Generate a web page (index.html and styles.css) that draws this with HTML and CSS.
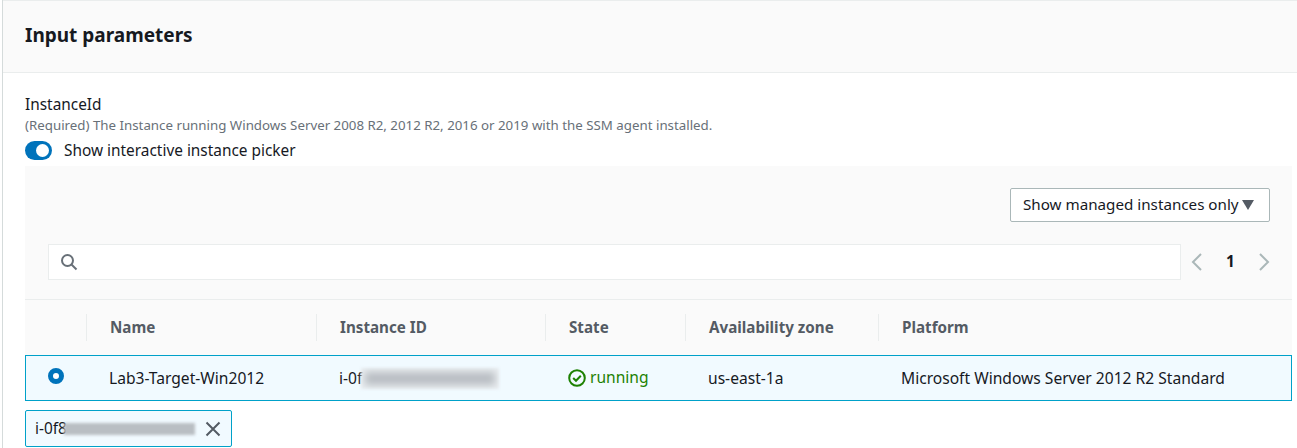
FILE: index.html
```html
<!DOCTYPE html>
<html lang="en">
<head>
    <meta charset="UTF-8">
    <title>Input parameters</title>
    <link rel="stylesheet" href="styles.css">
</head>
<body>
    <div class="card">
        <div class="card-head">
            <h2>Input parameters</h2>
        </div>
        <div class="card-body">
            <div class="label">InstanceId</div>
            <div class="hint">(Required) The Instance running Windows Server 2008 R2, 2012 R2, 2016 or 2019 with the SSM agent installed.</div>
            <div class="toggle-row">
                <span class="toggle"><span class="knob"></span></span>
                <span>Show interactive instance picker</span>
            </div>
            <div class="picker">
                <div class="filter-row">
                    <div class="select">
                        <span class="select-text">Show managed instances only</span>
                        <svg width="14" height="10" viewBox="0 0 14 10"><path d="M1 0h12L7 10z" fill="#545b64"/></svg>
                    </div>
                </div>
                <div class="search-row">
                    <div class="search">
                        <svg width="18" height="18" viewBox="0 0 18 18" fill="none" stroke="#687078" stroke-width="2"><circle cx="7.5" cy="7.5" r="5.5"/><path d="M11.5 11.5l5 5"/></svg>
                    </div>
                    <div class="pager">
                        <svg width="12" height="18" viewBox="0 0 12 18" fill="none" stroke="#aab7b8" stroke-width="2"><path d="M10 1L2 9l8 8"/></svg>
                        <b>1</b>
                        <svg width="12" height="18" viewBox="0 0 12 18" fill="none" stroke="#aab7b8" stroke-width="2"><path d="M2 1l8 8-8 8"/></svg>
                    </div>
                </div>
                <div class="table-head">
                    <div class="th"></div>
                    <div class="th">Name</div>
                    <div class="th">Instance ID</div>
                    <div class="th">State</div>
                    <div class="th">Availability zone</div>
                    <div class="th">Platform</div>
                </div>
            </div>
            <div class="table-row">
                <div class="td"><span class="radio"></span></div>
                <div class="td">Lab3-Target-Win2012</div>
                <div class="td">i-0f<span class="blur blur-id"></span></div>
                <div class="td running">
                    <svg width="18" height="18" viewBox="0 0 18 18" fill="none" stroke="#1d8102" stroke-width="2"><circle cx="9" cy="9" r="7.8"/><path d="M5.2 9l2.8 2.8 4.8-5"/></svg>
                    <span>running</span>
                </div>
                <div class="td">us-east-1a</div>
                <div class="td">Microsoft Windows Server 2012 R2 Standard</div>
            </div>
            <div class="chip">
                <span>i-0f8</span><span class="blur blur-chip"></span>
                <svg width="16" height="16" viewBox="0 0 16 16" fill="none" stroke="#545b64" stroke-width="2"><path d="M1.5 1.5l13 13M14.5 1.5l-13 13"/></svg>
            </div>
        </div>
    </div>
</body>
</html>
```
FILE: styles.css
```css
*{
    box-sizing: border-box;
}
body{
    margin: 0;
    background: #fff;
    color: #16191f;
    font-family: "Noto Sans", sans-serif;
    font-size: 15.4px;
    overflow: hidden;
}
.card{
    margin-left: 2px;
    height: 448px;
    border-left: 1px solid #d5dbdb;
}
.card-head{
    height: 73px;
    padding: 22px 22px 0;
    background: #fafafa;
    border-top: 1px solid #eaeded;
    border-bottom: 1px solid #eaeded;
}
.card-head h2{
    margin: 0;
    font-size: 19px;
    line-height: 25px;
    font-weight: 700;
}
.card-body{
    padding: 22px 5px 0 22px;
}
.label{
    line-height: 20px;
}
.hint{
    font-size: 13.3px;
    line-height: 16px;
    margin-top: 2px;
    color: #687078;
}
.toggle-row{
    display: flex;
    align-items: center;
    gap: 12px;
    height: 20px;
    margin-top: 7px;
}
.toggle{
    display: flex;
    justify-content: flex-end;
    align-items: center;
    width: 27px;
    height: 19px;
    padding-right: 3px;
    border-radius: 10px;
    background: #0073bb;
}
.knob{
    width: 13px;
    height: 13px;
    border-radius: 50%;
    background: #fff;
}
.picker{
    margin-top: 6px;
    background: #fafafa;
}
.filter-row{
    display: flex;
    justify-content: flex-end;
    padding: 22px 22px 0 0;
}
.select{
    display: flex;
    align-items: center;
    gap: 2px;
    width: 260px;
    height: 34px;
    padding: 0 0 0 12px;
    font-size: 15.2px;
    background: #fff;
    border: 1px solid #aab7b8;
    border-radius: 2px;
}
.select-text{
    margin-top: -2px;
}
.search-row{
    display: flex;
    align-items: center;
    height: 78px;
    padding: 2px 22px 0 23px;
    border-bottom: 1px solid #eaeded;
}
.search{
    display: flex;
    align-items: center;
    flex: 1;
    height: 36px;
    padding-left: 11px;
    background: #fff;
    border: 1px solid #eaeded;
}
.pager{
    display: flex;
    align-items: center;
    justify-content: space-between;
    width: 89px;
    padding-left: 10px;
}
.pager b{
    font-weight: 700;
}
.table-head, .table-row{
    display: grid;
    grid-template-columns: 61px 230px 229px 140px 193px 1fr;
    align-items: center;
}
.table-head{
    height: 55px;
}
.th{
    height: 27px;
    line-height: 27px;
    padding-left: 23px;
    border-left: 1px solid #eaeded;
    color: #545b64;
    font-size: 15.2px;
    font-weight: 700;
}
.th:first-child{
    border-left: 0;
}
.table-row{
    height: 46px;
    font-size: 15.6px;
    background: #f1faff;
    border: 1px solid #00a1c9;
}
.td{
    padding-left: 22px;
    display: flex;
    align-items: center;
}
.td:first-child{
    margin-top: -4px;
}
.radio{
    width: 16px;
    height: 16px;
    border-radius: 50%;
    border: 5px solid #0073bb;
    background: #fff;
}
.running{
    gap: 4px;
    color: #1d8102;
}
.running span{
    margin-top: -3px;
}
.blur{
    display: inline-block;
    flex: none;
    background: #b9bec3;
    filter: blur(1.5px);
}
.blur-id{
    width: 138px;
    height: 21px;
    margin-left: -1px;
    box-shadow: inset 0 0 7px 4px #e9edf0;
}
.chip{
    display: flex;
    align-items: center;
    width: 207px;
    height: 37px;
    margin-top: 9px;
    padding-left: 9px;
    background: #f1faff;
    border: 1px solid #00a1c9;
    border-radius: 2px;
}
.blur-chip{
    width: 131px;
    height: 12px;
    margin: 0 10px 0 -3px;
}
```
